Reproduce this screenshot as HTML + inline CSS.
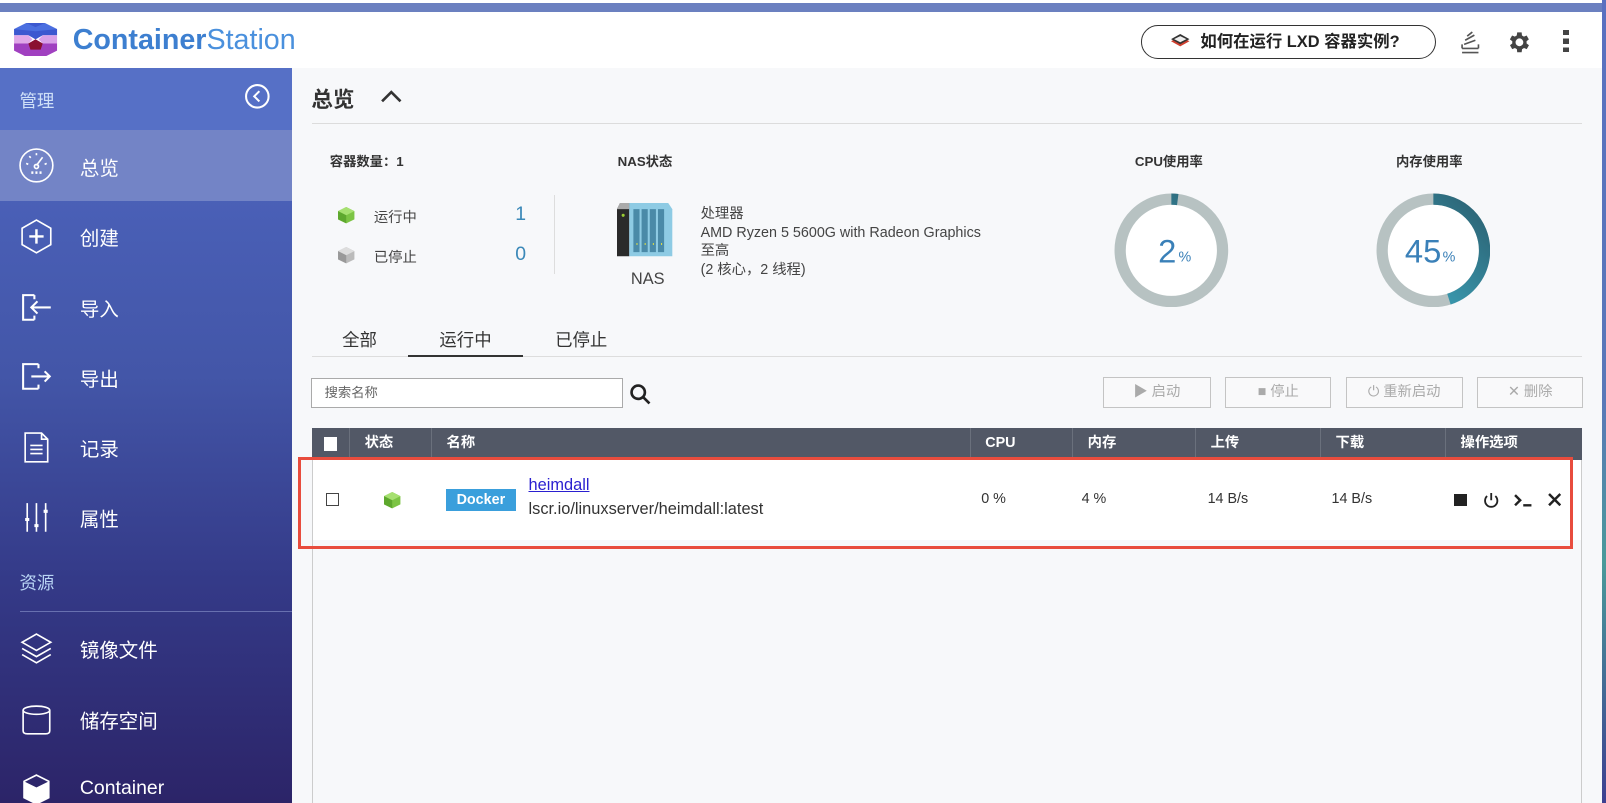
<!DOCTYPE html>
<html><head><meta charset="utf-8"><style>
*{box-sizing:border-box;margin:0;padding:0}
html,body{width:1606px;height:803px;overflow:hidden;background:#f7f8fa}
body{font-family:"Liberation Sans","Noto Sans CJK SC",sans-serif;color:#333}
#w{position:relative;width:1568px;height:784px;zoom:1.02423;overflow:hidden;background:#f7f8fa}
.a{position:absolute}
.nav{position:absolute;left:0;width:285px;height:69px;color:#fff;font-size:19px}
.nav span{position:absolute;left:78px;top:21px}
.nav svg{position:absolute;left:18px;top:17px}
.th{position:absolute;top:0;height:31px;line-height:31px;color:#fff;font-size:14px;font-weight:bold;border-left:1px solid #6a707c;padding-left:14px}
.btn{position:absolute;top:368px;height:30px;border:1px solid #c4c4c4;background:#f9f9fa;color:#aaa;font-size:14px;line-height:28px;text-align:center}
.cell{position:absolute;top:479px;font-size:14px;color:#333}
</style></head><body><div id="w">
<div class="a" style="left:0;top:0;width:1568px;height:3px;background:#fff"></div>
<div class="a" style="left:0;top:3px;width:1568px;height:9px;background:#6b80c0"></div>
<div class="a" style="left:0;top:12px;width:1564px;height:54px;background:#fff"></div>
<div class="a" style="left:1564px;top:0;width:4px;height:784px;background:linear-gradient(#5a70c0,#5a78b8 50%,#4a9a9a 70%,#3d3f90)"></div>
<svg class="a" style="left:12px;top:22px" width="46" height="33" viewBox="0 0 46 33">
<path d="M2 6 L14 0 L32 0 L44 6 L44 12 L30 12 L23 16 L16 12 L2 12Z" fill="#3c58d0"/>
<path d="M2 6 L14 0 L23 4 L32 0 L44 6 L23 8Z" fill="#4b6fe0"/>
<path d="M2 12 L16 12 L20 16 L16 20 L2 20Z" fill="#e0a8e8"/>
<path d="M44 12 L30 12 L26 16 L30 20 L44 20Z" fill="#d8a0e8"/>
<path d="M2 20 L16 20 L23 16 L30 20 L44 20 L44 27 L32 33 L14 33 L2 27Z" fill="#a040c0"/>
<path d="M16 20 L23 16 L30 20 L28 26 L18 26Z" fill="#8a1030"/>
</svg>
<div class="a" style="left:71px;top:22px;font-size:28px;line-height:34px;color:#3d7fd0"><b>Container</b><span style="color:#4a90dd">Station</span></div>
<div class="a" style="left:1114px;top:24px;width:288px;height:34px;border:1px solid #333;border-radius:17px;font-size:16px;font-weight:bold;line-height:32px;color:#222;padding-left:57px">如何在运行 LXD 容器实例?</div>
<svg class="a" style="left:1142px;top:32px" width="20" height="16"><path d="M1 8 L10 3 L19 8 L10 13Z" fill="#d04030"/><path d="M1 6 L10 1 L19 6 L10 11Z" fill="#333"/><path d="M4 6 L10 3 L16 6 L10 9Z" fill="#eee"/></svg>
<svg class="a" style="left:1424px;top:29px" width="22" height="24" fill="none" stroke="#555" stroke-width="1.6"><path d="M3 22 H19 M3 18 H19 M5 14 L16 10 M6 10 L15 5 M8 6 L13 2 M3 18 V14 M19 18 V14"/></svg>
<svg class="a" style="left:1469px;top:28px" width="26" height="26" viewBox="0 0 24 24"><path fill="#444" d="M19.4 13a7.5 7.5 0 0 0 0-2l2.1-1.6-2-3.5-2.5 1a7 7 0 0 0-1.7-1L15 3h-4l-.4 2.9a7 7 0 0 0-1.7 1l-2.5-1-2 3.5L6.6 11a7.5 7.5 0 0 0 0 2l-2.1 1.6 2 3.5 2.5-1a7 7 0 0 0 1.7 1L11 21h4l.4-2.9a7 7 0 0 0 1.7-1l2.5 1 2-3.5zM13 15.5a3.5 3.5 0 1 1 0-7 3.5 3.5 0 0 1 0 7z"/></svg>
<div class="a" style="left:1526px;top:29px;width:6px;height:22px;background:repeating-linear-gradient(#444 0 5px,transparent 5px 8.5px)"></div>
<div class="a" style="left:0;top:66px;width:285px;height:718px;background:linear-gradient(#4f67c2 0,#4356a8 300px,#343a88 500px,#2c2468 718px)"></div>
<div class="a" style="left:0;top:66px;width:285px;height:61px;background:#5670c6"></div>
<div class="a" style="left:19px;top:86px;font-size:17px;color:#cfe0f8">管理</div>
<svg class="a" style="left:238px;top:81px" width="26" height="26" fill="none" stroke="#fff" stroke-width="2"><circle cx="13" cy="13" r="11"/><path d="M15 8 L10 13 L15 18"/></svg>
<div class="a" style="left:0;top:127px;width:285px;height:69px;background:#7384c6"></div>
<div class="nav" style="top:127px"><svg width="36" height="36" fill="none" stroke="#fff" stroke-width="1.6"><circle cx="18" cy="18" r="16"/><path d="M18 18 L24 10"/><circle cx="18" cy="19" r="2"/><path d="M8 16 l2 1 M11 9 l1.5 1.5 M18 6 v2 M28 16 l-2 1"/><path d="M13 25 h2 M17 25 h2 M21 25 h2" stroke-width="2.5"/></svg><span>总览</span></div>
<div class="nav" style="top:196px"><svg width="36" height="36" fill="none" stroke="#fff" stroke-width="1.6"><path d="M18 2 L32 10 V26 L18 34 L4 26 V10Z"/><path d="M18 11 V25 M11 18 H25" stroke-width="2.4"/></svg><span>创建</span></div>
<div class="nav" style="top:265px"><svg width="36" height="36" fill="none" stroke="#fff" stroke-width="2"><path d="M16 6 H5 V30 H16 M16 6 V10 M16 30 V26"/><path d="M32 18 H13 M19 12 L13 18 L19 24"/></svg><span>导入</span></div>
<div class="nav" style="top:333px"><svg width="36" height="36" fill="none" stroke="#fff" stroke-width="2"><path d="M20 6 H5 V30 H20 M20 6 V10 M20 30 V26"/><path d="M13 18 H31 M26 13 L31 18 L26 23"/></svg><span>导出</span></div>
<div class="nav" style="top:402px"><svg width="36" height="36" fill="none" stroke="#fff" stroke-width="1.6"><path d="M7 4 H23 L29 10 V32 H7Z M23 4 V10 H29"/><path d="M12 16 H24 M12 20 H24 M12 24 H24"/></svg><span>记录</span></div>
<div class="nav" style="top:470px"><svg width="36" height="36" fill="none" stroke="#fff" stroke-width="1.6"><path d="M9 4 V32 M18 4 V32 M27 4 V32"/><path d="M7 20 h4 M16 26 h4 M25 12 h4" stroke-width="3"/></svg><span>属性</span></div>
<div class="a" style="left:19px;top:557px;font-size:17px;color:#b8d4f4">资源</div>
<div class="a" style="left:20px;top:597px;width:265px;height:1px;background:#6870b0"></div>
<div class="nav" style="top:598px"><svg width="36" height="36" fill="none" stroke="#fff" stroke-width="1.6"><path d="M18 4 L32 12 L18 20 L4 12Z M4 18 L18 26 L32 18 M4 24 L18 32 L32 24"/></svg><span>镜像文件</span></div>
<div class="nav" style="top:667px"><svg width="36" height="36" fill="none" stroke="#fff" stroke-width="1.6"><ellipse cx="18" cy="9" rx="13" ry="4"/><path d="M5 9 V29 Q5 32 9 32 H27 Q31 32 31 29 V9"/></svg><span>储存空间</span></div>
<div class="nav" style="top:736px"><svg width="36" height="36" fill="#fff" stroke="#fff" stroke-width="1.6"><path d="M18 4 L30 10 V26 L18 32 L6 26 V10Z" fill="none"/><path d="M18 17 L30 11 V26 L18 32Z M18 17 L6 11 V26 L18 32Z"/></svg><span style="top:23px">Container</span></div>
<div class="a" style="left:304px;top:81px;font-size:21px;font-weight:bold;color:#333">总览</div>
<svg class="a" style="left:370px;top:86px" width="24" height="16" fill="none" stroke="#333" stroke-width="2.6"><path d="M3 13 L12 4 L21 13"/></svg>
<div class="a" style="left:305px;top:120px;width:1240px;height:1px;background:#dcdcdc"></div>
<div class="a" style="left:322px;top:147px;font-size:13px;font-weight:bold">容器数量：1</div>
<svg class="a" style="left:329px;top:201px" width="18" height="18"><path d="M9 1 L17 5 V13 L9 17 L1 13 V5Z" fill="#7cc444"/><path d="M9 1 L17 5 L9 9 L1 5Z" fill="#a6e070"/><path d="M9 9 V17 L1 13 V5Z" fill="#5ea82e"/></svg>
<svg class="a" style="left:329px;top:240px" width="18" height="18"><path d="M9 1 L17 5 V13 L9 17 L1 13 V5Z" fill="#bbb"/><path d="M9 1 L17 5 L9 9 L1 5Z" fill="#ddd"/><path d="M9 9 V17 L1 13 V5Z" fill="#999"/></svg>
<div class="a" style="left:365px;top:201px;font-size:14px;color:#444">运行中</div>
<div class="a" style="left:365px;top:240px;font-size:14px;color:#444">已停止</div>
<div class="a" style="left:503px;top:198px;font-size:19px;color:#3a88b8">1</div>
<div class="a" style="left:503px;top:237px;font-size:19px;color:#3a88b8">0</div>
<div class="a" style="left:541px;top:190px;width:1px;height:78px;background:#ddd"></div>
<div class="a" style="left:603px;top:147px;font-size:13px;font-weight:bold">NAS状态</div>
<svg class="a" style="left:602px;top:198px" width="56" height="54"><path d="M0 6 L3 0 H12 V52 H0Z" fill="#2a2a2a"/><path d="M3 0 H12 V6 H0Z" fill="#aaa"/><circle cx="6" cy="12" r="1.5" fill="#9c3"/><path d="M12 0 H50 L54 6 V52 H12Z" fill="#8ecbe4"/><path d="M16 6 H22 V48 H16Z M24 6 H30 V48 H24Z M32 6 H38 V48 H32Z M40 6 H46 V48 H40Z" fill="#4a8aa8"/><path d="M19 40 h1 M27 40 h1 M35 40 h1 M43 40 h1" stroke="#dd4" stroke-width="2"/></svg>
<div class="a" style="left:616px;top:264px;font-size:16px;color:#444">NAS</div>
<div class="a" style="left:684px;top:200px;font-size:14px;line-height:18.3px;color:#444">处理器<br>AMD Ryzen 5 5600G with Radeon Graphics<br>至高<br>(2 核心，2 线程)</div>
<div class="a" style="left:1108px;top:147px;font-size:13px;font-weight:bold">CPU使用率</div>
<div class="a" style="left:1363px;top:147px;font-size:13px;font-weight:bold">内存使用率</div>
<svg class="a" style="left:1088px;top:188px" width="112" height="112"><defs><linearGradient id="g" x1="0" y1="0" x2="1" y2="1"><stop offset="0" stop-color="#3fb0c8"/><stop offset="1" stop-color="#2b5f70"/></linearGradient></defs>
<circle cx="56" cy="56" r="50" fill="#fff" stroke="#b7c2c2" stroke-width="11"/>
<circle cx="56" cy="56" r="50" fill="none" stroke="url(#g)" stroke-width="11" stroke-dasharray="6.3 400" transform="rotate(-90 56 56)"/>
<text x="52" y="68" font-size="32" fill="#3a80b8" text-anchor="middle" font-family="Liberation Sans">2</text><text x="63" y="67" font-size="14" fill="#3a80b8" font-family="Liberation Sans">%</text></svg>
<svg class="a" style="left:1343px;top:188px" width="112" height="112">
<circle cx="56" cy="56" r="50" fill="#fff" stroke="#b7c2c2" stroke-width="11"/>
<circle cx="56" cy="56" r="50" fill="none" stroke="url(#g)" stroke-width="11" stroke-dasharray="141.4 400" transform="rotate(-90 56 56)"/>
<text x="46" y="68" font-size="32" fill="#3a80b8" text-anchor="middle" font-family="Liberation Sans">45</text><text x="65" y="67" font-size="14" fill="#3a80b8" font-family="Liberation Sans">%</text></svg>
<div class="a" style="left:334px;top:319px;font-size:17px;color:#333">全部</div>
<div class="a" style="left:429px;top:319px;font-size:17px;color:#333">运行中</div>
<div class="a" style="left:542px;top:319px;font-size:17px;color:#333">已停止</div>
<div class="a" style="left:305px;top:348px;width:1240px;height:1px;background:#ddd"></div>
<div class="a" style="left:398px;top:347px;width:113px;height:2px;background:#333"></div>
<div class="a" style="left:304px;top:369px;width:304px;height:29px;border:1px solid #aaa;background:#fff;font-size:13px;color:#666;line-height:27px;padding-left:12px">搜索名称</div>
<svg class="a" style="left:614px;top:374px" width="22" height="22" fill="none" stroke="#222" stroke-width="2.6"><circle cx="9" cy="9" r="6.5"/><path d="M14 14 L20 20"/></svg>
<div class="btn" style="left:1077px;width:105px">▶ 启动</div>
<div class="btn" style="left:1196px;width:104px">■ 停止</div>
<div class="btn" style="left:1314px;width:114px">⏻ 重新启动</div>
<div class="btn" style="left:1442px;width:104px">✕ 删除</div>
<div class="a" style="left:305px;top:418px;width:1240px;height:31px;background:#525866">
<div class="a" style="left:11px;top:9px;width:13px;height:13px;background:#fff"></div>
<div class="th" style="left:36px;width:80px">状态</div>
<div class="th" style="left:116px;width:526px">名称</div>
<div class="th" style="left:642px;width:100px">CPU</div>
<div class="th" style="left:742px;width:120px">内存</div>
<div class="th" style="left:862px;width:122px">上传</div>
<div class="th" style="left:984px;width:122px">下载</div>
<div class="th" style="left:1106px;width:134px">操作选项</div>
</div>
<div class="a" style="left:305px;top:449px;width:1240px;height:335px;border-left:1px solid #ccc;border-right:1px solid #ccc"></div>
<div class="a" style="left:306px;top:449px;width:1238px;height:78px;background:#fff"></div>
<div class="a" style="left:318px;top:481px;width:13px;height:13px;border:1.5px solid #444;background:#fff"></div>
<svg class="a" style="left:374px;top:479px" width="18" height="18"><path d="M9 1 L17 5 V13 L9 17 L1 13 V5Z" fill="#7cc444"/><path d="M9 1 L17 5 L9 9 L1 5Z" fill="#a6e070"/><path d="M9 9 V17 L1 13 V5Z" fill="#5ea82e"/></svg>
<div class="a" style="left:435px;top:477px;width:69px;height:22px;background:#3a9fdc;color:#fff;font-size:14px;font-weight:bold;line-height:22px;text-align:center">Docker</div>
<div class="a" style="left:516px;top:465px;font-size:16px;color:#2a1fd0;text-decoration:underline">heimdall</div>
<div class="a" style="left:516px;top:488px;font-size:16px;color:#333">lscr.io/linuxserver/heimdall:latest</div>
<div class="cell" style="left:958px">0 %</div>
<div class="cell" style="left:1056px">4 %</div>
<div class="cell" style="left:1179px">14 B/s</div>
<div class="cell" style="left:1300px">14 B/s</div>
<div class="a" style="left:1420px;top:482px;width:12px;height:12px;background:#222"></div>
<svg class="a" style="left:1447px;top:479px" width="18" height="18" fill="none" stroke="#222" stroke-width="1.8"><path d="M9 2 V9 M5 5 A6 6 0 1 0 13 5"/></svg>
<svg class="a" style="left:1477px;top:480px" width="20" height="16" fill="none" stroke="#222" stroke-width="2.4"><path d="M2 3 L7 8 L2 13 M10 13 H18"/></svg>
<svg class="a" style="left:1511px;top:481px" width="13" height="13" stroke="#222" stroke-width="2.4"><path d="M1 1 L12 12 M12 1 L1 12"/></svg>
<div class="a" style="left:291px;top:446px;width:1245px;height:90px;border:3px solid #e84c3d"></div>
</div></body></html>
